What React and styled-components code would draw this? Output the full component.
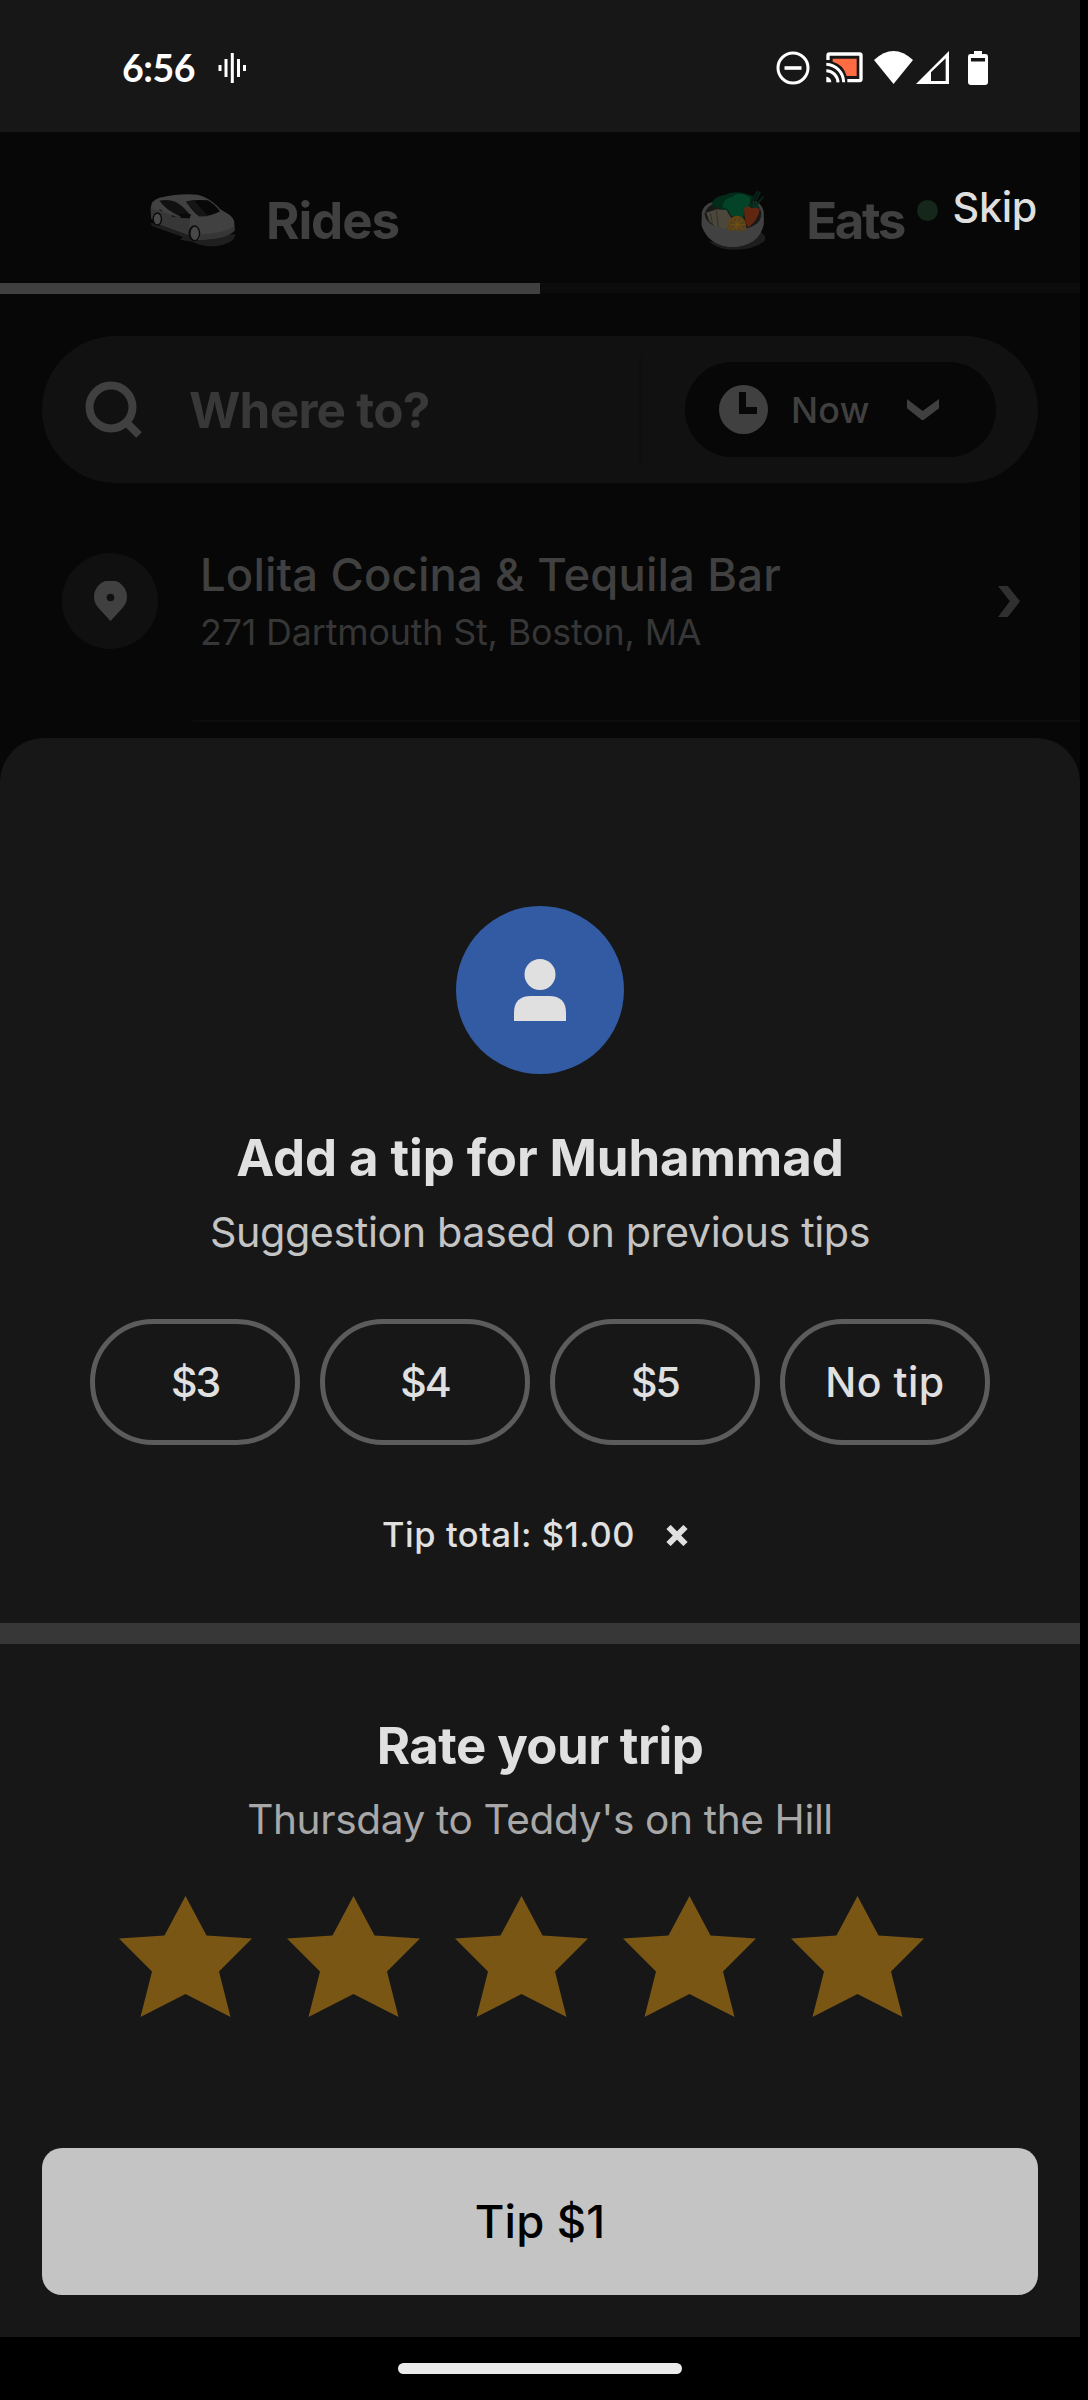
import React from "react";
import styled, { createGlobalStyle } from "styled-components";

const GlobalStyle = createGlobalStyle`
  * { box-sizing: border-box; }
  body { margin: 0; background: #000; }
`;

const Screen = styled.div`
  position: relative;
  width: 1080px;
  height: 2400px;
  overflow: hidden;
  display: flex;
  flex-direction: column;
  background: #070707;
  font-family: Inter, "Liberation Sans", sans-serif;
`;

const Text = styled.span`
  display: block;
  white-space: nowrap;
  font-size: ${(p) => p.$size}px;
  font-weight: ${(p) => p.$weight || 400};
  line-height: ${(p) => p.$line || 60}px;
  letter-spacing: ${(p) => p.$track || 0}px;
  color: ${(p) => p.$color};
`;

const Icon = styled.svg.attrs({ preserveAspectRatio: "none" })`
  display: block;
  flex: none;
  width: ${(p) => p.$w}px;
  height: ${(p) => p.$h}px;
  margin-left: ${(p) => p.$ml || 0}px;
`;

/* Status bar */
const StatusBar = styled.header`
  height: 132px;
  flex: none;
  display: flex;
  align-items: center;
  justify-content: space-between;
  padding: 3px 92px 0 122px;
  background: #171717;
`;

const Cluster = styled.div`
  display: flex;
  align-items: center;
`;

const Clock = styled.span`
  font-family: Lato, "Open Sans", sans-serif;
  font-size: 37.5px;
  font-weight: 700;
  line-height: 44px;
  letter-spacing: -0.5px;
  color: #fff;
`;

/* Product tabs */
const Tabs = styled.nav`
  height: 162px;
  flex: none;
  display: grid;
  grid-template-columns: 1fr 1fr;
`;

const Tab = styled.div`
  display: flex;
  align-items: center;
  padding: 26px 0 0 ${(p) => p.$indent}px;
  border-bottom: ${(p) => (p.$active ? "11px solid #404040" : "10px solid #0b0b0b")};
  height: ${(p) => (p.$active ? 162 : 161)}px;
`;

const TabLabel = styled(Text)`
  margin-left: ${(p) => p.$gap}px;
`;

const Dot = styled.i`
  width: 21px;
  height: 21px;
  margin: -20px 0 0 13px;
  border-radius: 50%;
  background: #14271a;
`;

const Skip = styled.button`
  position: absolute;
  top: 182px;
  right: 43px;
  padding: 0;
  border: 0;
  background: none;
  font-family: inherit;
`;

/* Search */
const SearchBar = styled.section`
  flex: none;
  height: 147px;
  margin: 42px 42px 0;
  padding: 0 42px 0 43px;
  border-radius: 74px;
  display: flex;
  align-items: center;
  background: #111;
`;

const Placeholder = styled(Text)`
  margin-left: 46px;
  flex: 1;
`;

const Divider = styled.span`
  width: 4px;
  height: 112px;
  margin-right: 42px;
  background: #0f0f0f;
`;

const TimePill = styled.div`
  width: 311px;
  height: 95px;
  padding-left: 34px;
  border-radius: 48px;
  display: flex;
  align-items: center;
  background: #070707;
`;

const PillLabel = styled(Text)`
  width: 116px;
  margin-left: 23px;
`;

/* Recent place */
const Place = styled.section`
  flex: none;
  height: 237px;
  padding: 63px 60px 0 62px;
  display: flex;
`;

const PlaceBadge = styled.span`
  width: 96px;
  height: 96px;
  margin: 7px 42px 0 0;
  border-radius: 50%;
  display: grid;
  place-items: center;
  background: #101010;
`;

const PlaceText = styled.div`
  flex: 1;
`;

const PlaceArrow = styled.span`
  padding-top: 40px;
`;

const Rule = styled.hr`
  flex: none;
  width: 887px;
  height: 2px;
  margin: 0 0 16px auto;
  border: 0;
  background: #0c0c0c;
`;

/* Bottom sheet */
const Sheet = styled.main`
  flex: none;
  height: 1599px;
  border-radius: 44px 44px 0 0;
  display: flex;
  flex-direction: column;
  align-items: center;
  background: #171717;
`;

const Avatar = styled.div`
  width: 168px;
  height: 168px;
  margin: 168px 0 47px;
  border-radius: 50%;
  display: grid;
  place-items: center;
  background: #325ba3;
`;

const Chips = styled.div`
  display: grid;
  grid-template-columns: repeat(4, 210px);
  gap: 20px;
  margin-top: 49px;
`;

const Chip = styled.button`
  height: 126px;
  padding: 0;
  border: 5px solid #5c5c5c;
  border-radius: 63px;
  display: grid;
  place-items: center;
  background: transparent;
  font-family: inherit;
`;

const Total = styled.div`
  display: flex;
  align-items: center;
  gap: 31px;
  height: 50px;
  margin: 65px 0 63px;
  padding-right: 10px;
`;

const Band = styled.div`
  align-self: stretch;
  height: 21px;
  margin-bottom: 65px;
  background: #373737;
`;

const Stars = styled.div`
  display: flex;
  gap: 35px;
  align-self: flex-start;
  margin: 39px 0 131px 119px;
`;

const Submit = styled.button`
  width: 996px;
  height: 147px;
  padding: 0;
  border: 0;
  border-radius: 20px;
  display: grid;
  place-items: center;
  background: #c4c4c4;
  font-family: inherit;
`;

const NavBar = styled.footer`
  flex: 1;
  display: flex;
  justify-content: center;
  align-items: center;
  background: #000;
`;

const NavHandle = styled.span`
  width: 284px;
  height: 11px;
  border-radius: 6px;
  background: #ebebeb;
`;

const CarIcon = () => (
  <Icon $w={88} $h={54.7} viewBox="430 188 254 164">
    <path d="M434 279 L452 278 L560 318 L680 312 Q676 340 622 348 Q585 349 553 334 L520 328 L528 320 L440 288Z" fill="#1f1f1f" />
    <path d="M435 232 Q436 210 460 202 Q520 188 570 193 Q600 200 626 226 Q634 238 650 246 Q670 256 676 272 L677 300 Q660 322 600 327 L572 329 L545 314 L466 284 L436 264Z" fill="#414141" />
    <path d="M435 232 Q450 240 500 255 L548 264 L545 314 L466 284 L436 264Z" fill="#373737" />
    <path d="M576 312 Q640 312 677 288 L677 302 Q655 324 600 327 L577 329Z" fill="#363636" />
    <path d="M460 211 Q485 206 508 215 Q535 232 549 256 L519 258 Q478 238 460 211Z" fill="#111" />
    <path d="M537 214 Q558 206 600 210 Q620 222 635 243 Q610 259 575 258 Q558 245 537 214Z" fill="#080808" />
    <path d="M537 214 L575 258 L600 258 L560 210Z" fill="#151515" />
    <path d="M518 252 L534 248 L551 252 L548 264 L522 263Z" fill="#0a0a0a" />
    <path d="M460 238 L468 242 M495 256 L506 260" stroke="#151515" strokeWidth="3" />
    <ellipse cx="454" cy="266" rx="14" ry="20" fill="#0a0a0a" />
    <ellipse cx="454" cy="266" rx="10" ry="16" fill="#484848" />
    <ellipse cx="561" cy="309" rx="17" ry="24" fill="#0a0a0a" />
    <ellipse cx="562" cy="309" rx="12" ry="20" fill="#484848" />
  </Icon>
);

const BowlIcon = () => (
  <Icon $w={67.3} $h={60.7} viewBox="450 178 194 182">
    <path d="M475 332 Q590 350 625 305 Q645 318 635 332 Q600 360 540 357 Q500 356 475 332Z" fill="#1d1d1d" />
    <path d="M455 248 Q460 216 500 212 L610 212 Q632 222 634 248 L633 282 Q620 345 543 349 Q475 345 455 285Z" fill="#414141" />
    <path d="M463 250 Q470 222 500 216 L600 214 Q624 226 627 248 Q625 285 590 292 L500 290 Q465 275 463 250Z" fill="#191917" />
    <path d="M484 226 Q485 198 520 193 Q545 180 575 187 L603 196 L596 240 L535 246 L505 232Z" fill="#032b1a" />
    <path d="M514 230 Q516 202 545 198 Q555 184 578 192 L594 200 L594 228 Q576 240 574 262 L540 256 L530 236Z" fill="#034328" />
    <path d="M593 226 L616 181 M604 225 L623 183 M606 232 L633 197" stroke="#08241a" strokeWidth="6" />
    <path d="M593 226 L610 215 L622 230 L612 236Z" fill="#06301f" />
    <path d="M577 232 Q586 222 600 233 Q612 226 622 236 Q620 265 590 290 Q578 280 577 232Z" fill="#60260f" />
    <path d="M468 246 L499 236 L526 238 L540 262 L528 296 L498 292 L477 272Z" fill="#4b473b" />
    <path d="M497 240 L503 289 M480 248 L486 279" stroke="#35322a" strokeWidth="3" />
    <path d="M455 262 Q480 288 530 298 L584 294 Q615 284 634 258 L633 282 Q620 345 543 349 Q475 345 455 285Z" fill="#414141" />
    <path d="M532 299 Q526 258 557 255 Q586 258 583 299Z" fill="#65440f" />
    <path d="M536 300 Q532 264 557 261 Q582 264 580 300Z" fill="#54401f" />
    <path d="M557 263 V298 M538 282 H579 M543 268 L574 298 M572 268 L542 298" stroke="#74500f" strokeWidth="3" />
  </Icon>
);

const Star = () => (
  <Icon $w={133} $h={121} viewBox="0 0 133 121">
    <path d="M66.5 0 L87.5 39.5 L133 42.5 L100 75.5 L111.5 121 L66.5 98 L21.5 121 L33 75.5 L0 42.5 L45.5 39.5Z" fill="#7a5615" />
  </Icon>
);

const tips = ["$3", "$4", "$5", "No tip"];

export default function App() {
  return (
    <>
      <GlobalStyle />
      <Screen>
        <StatusBar>
          <Cluster>
            <Clock>6:56</Clock>
            <Icon $w={29} $h={30} $ml={23} viewBox="0 0 29 30">
              <path d="M2 12V18 M8 6V24 M14.3 0V30 M20.5 6V24 M26.5 12V18" stroke="#fff" strokeWidth="3" />
            </Icon>
          </Cluster>
          <Cluster>
            <Icon $w={34} $h={34} viewBox="0 0 34 34">
              <circle cx="17" cy="17" r="15" fill="none" stroke="#fff" strokeWidth="3" />
              <path d="M8.500 17H25.500" stroke="#fff" strokeWidth="3.600" />
            </Icon>
            <Icon $w={37} $h={31} $ml={16} viewBox="258 67 111 93">
              <path d="M264 91V77Q264 73 268 73H359Q363 73 363 77V149Q363 153 359 153H322" fill="none" stroke="#fff" strokeWidth="10" />
              <path d="M278 87H350V139H320Q310 104 278 96Z" fill="#ff6b42" />
              <path d="M259 104A54 55 0 0 1 311 158 M259 123A36 37 0 0 1 294 158" fill="none" stroke="#fff" strokeWidth="9" />
              <path d="M259 141A16 17 0 0 1 274 158H259Z" fill="#fff" />
            </Icon>
            <Icon $w={39} $h={33} $ml={11} viewBox="0 0 39 33">
              <path d="M0 9Q19.500 -9 39 9L19.500 33Z" fill="#fff" />
            </Icon>
            <Icon $w={33} $h={33} $ml={3} viewBox="528 60 99 99">
              <path d="M528 159L627 60V159Z M573 124V150H617V82Z" fill="#fff" fillRule="evenodd" />
            </Icon>
            <Icon $w={20} $h={34} $ml={19} viewBox="0 0 20 34">
              <path d="M6 0H14V3H18Q20 3 20 5.500V31Q20 34 17 34H3Q0 34 0 31V5.500Q0 3 2 3H6Z M3 7V10.500H17V7Z" fill="#fff" fillRule="evenodd" />
            </Icon>
          </Cluster>
        </StatusBar>

        <Tabs>
          <Tab $active $indent={149}>
            <CarIcon />
            <TabLabel $gap={29} $size={51} $weight={700} $track={-1.1} $color="#404040">Rides</TabLabel>
          </Tab>
          <Tab $indent={160}>
            <BowlIcon />
            <TabLabel $gap={39} $size={51} $weight={700} $track={-2.5} $color="#404040">Eats</TabLabel>
            <Dot />
          </Tab>
        </Tabs>
        <Skip>
          <Text $size={41.3} $weight={500} $line={50} $track={-0.3} $color="#dfdfdf">Skip</Text>
        </Skip>

        <SearchBar>
          <Icon $w={58} $h={58} viewBox="0 0 58 58">
            <circle cx="26" cy="26" r="21.500" fill="none" stroke="#404040" strokeWidth="8" />
            <path d="M40 40L54 54" stroke="#404040" strokeWidth="8" />
          </Icon>
          <Placeholder $size={49.5} $weight={700} $track={-0.75} $color="#383838">Where to?</Placeholder>
          <Divider />
          <TimePill>
            <Icon $w={49} $h={49} viewBox="0 0 49 49">
              <path d="M24.500 0A24.500 24.500 0 1 1 24.500 49A24.500 24.500 0 1 1 24.500 0Z M20 7V29H38V22H27V7Z" fill="#404040" fillRule="evenodd" />
            </Icon>
            <PillLabel $size={35.8} $weight={500} $track={0.3} $color="#404040">Now</PillLabel>
            <Icon $w={32} $h={21.700} viewBox="1046 237 92 65">
              <path d="M1046 237L1091 273L1138 237V265L1091 302L1046 265Z" fill="#404040" />
            </Icon>
          </TimePill>
        </SearchBar>

        <Place>
          <PlaceBadge>
            <Icon $w={33} $h={40} viewBox="0 0 33 40">
              <path d="M16.500 40L4.500 27A16.500 16.500 0 1 1 28.500 27Z M16.500 12.700A3.800 3.800 0 1 0 16.500 20.300A3.800 3.800 0 1 0 16.500 12.700Z" fill="#404040" fillRule="evenodd" />
            </Icon>
          </PlaceBadge>
          <PlaceText>
            <Text $size={45.4} $weight={500} $line={58} $track={0.15} $color="#404040">Lolita Cocina &amp; Tequila Bar</Text>
            <Text $size={35.8} $line={57} $track={-0.15} $color="#363636">271 Dartmouth St, Boston, MA</Text>
          </PlaceText>
          <PlaceArrow>
            <Icon $w={22} $h={31} viewBox="1307 258 63 93">
              <path d="M1307 258H1335L1370 304L1335 351H1307L1341 304Z" fill="#303030" />
            </Icon>
          </PlaceArrow>
        </Place>
        <Rule />

        <Sheet>
          <Avatar>
            <Icon $w={52} $h={62} viewBox="0 0 52 62">
              <circle cx="26" cy="15.500" r="15.500" fill="#e0e0e0" />
              <path d="M0 62V54Q0 37 17 37H35Q52 37 52 54V62Z" fill="#e0e0e0" />
            </Icon>
          </Avatar>
          <Text $size={50.9} $weight={700} $line={73} $track={-0.08} $color="#e0e0e0">Add a tip for Muhammad</Text>
          <Text $size={41.3} $line={76} $track={-0.42} $color="#c4c4c4">Suggestion based on previous tips</Text>
          <Chips>
            {tips.map((tip) => (
              <Chip key={tip}>
                <Text $size={41} $weight={500} $track={tip.length > 2 ? 0.5 : -2} $color="#e0e0e0">{tip}</Text>
              </Chip>
            ))}
          </Chips>
          <Total>
            <Text $size={34.4} $weight={500} $track={0.57} $color="#e0e0e0">Tip total: $1.00</Text>
            <Icon $w={22} $h={21} viewBox="0 0 22 21">
              <path d="M2.500 2L19.500 19M19.500 2L2.500 19" stroke="#e0e0e0" strokeWidth="6" />
            </Icon>
          </Total>
          <Band />
          <Text $size={50.9} $weight={700} $line={73} $track={-0.54} $color="#e0e0e0">Rate your trip</Text>
          <Text $size={40.6} $line={75} $track={-0.36} $color="#a8a8a8">Thursday to Teddy's on the Hill</Text>
          <Stars>
            {[1, 2, 3, 4, 5].map((n) => (
              <Star key={n} />
            ))}
          </Stars>
          <Submit>
            <Text $size={45.4} $weight={500} $track={0.2} $color="#000">Tip $1</Text>
          </Submit>
        </Sheet>

        <NavBar>
          <NavHandle />
        </NavBar>
      </Screen>
    </>
  );
}
